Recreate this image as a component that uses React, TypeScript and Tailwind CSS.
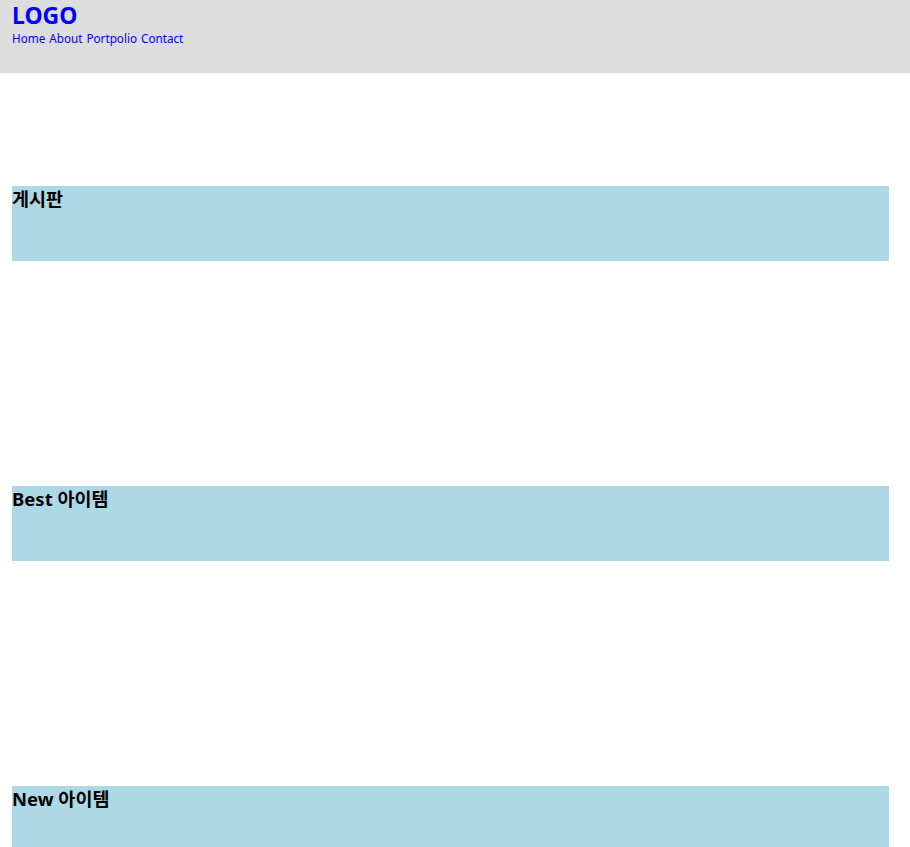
export default function App() {
  const font = { fontFamily: '"Noto Sans", "Noto Sans CJK KR", sans-serif' };
  return (
    <div style={font} className="min-h-[847px] bg-white">
      <header className="h-[73px] bg-[#dddddd] px-3">
        <div className="text-[23px] font-bold leading-[30px] text-[#0000ff]">LOGO</div>
        <nav className="flex gap-[4px] text-[11.7px] leading-[16px] text-[#0000ff]">
          <span>Home</span>
          <span>About</span>
          <span>Portpolio</span>
          <span>Contact</span>
        </nav>
      </header>
      <div className="flex flex-col gap-[225px] pl-3 pr-[21px] pt-[113px]">
        {["게시판", "Best 아이템", "New 아이템"].map((t) => (
          <section key={t} className="h-[75px] bg-[#add8e6]">
            <h3 className="text-[18.5px] font-bold leading-[26px] text-black">{t}</h3>
          </section>
        ))}
      </div>
    </div>
  );
}
